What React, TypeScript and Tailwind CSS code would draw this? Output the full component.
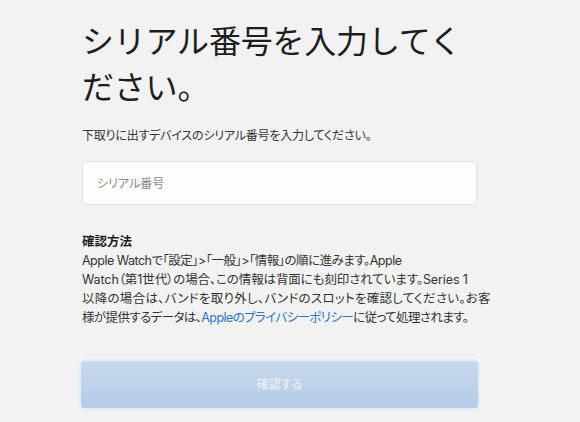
export default function App() {
  return (
    <div className="min-h-[422px] w-[580px] bg-[#f2f2f2] font-['Inter','Noto_Sans_CJK_JP',sans-serif] text-[#1d1d1f]">
      <div className="ml-[82px] w-[396px] pt-[19px]">
        <h1 className="text-[32px] leading-[46px] font-normal tracking-[-0.2px] text-[#1d1d1f]">
          シリアル番号を入力してください。
        </h1>

        <p className="mt-[16px] text-[12px] leading-[18px] tracking-[-0.2px] text-[#333] [font-feature-settings:'palt']">
          下取りに出すデバイスのシリアル番号を入力してください。
        </p>

        <input
          type="text"
          placeholder="シリアル番号"
          className="mt-[16px] block h-[44px] w-[395px] rounded-[4px] border border-[#e2e2e2] bg-[#fdfdfd] px-[14px] text-[12px] text-[#333] outline-none placeholder:text-[#8a8a8a] [font-feature-settings:'palt']"
        />

        <div className="mt-[27px] text-[12.5px] leading-[19px] text-[#333] [font-feature-settings:'palt']">
          <h2 className="font-bold text-[#1d1d1f]">確認方法</h2>
          <p className="whitespace-nowrap">
            <span className="tracking-[-0.5px]">
              Apple Watchで「設定」&gt;「一般」&gt;「情報」の順に進みます。Apple
            </span>
            <br />
            <span className="tracking-[-0.1px]">
              Watch（第1世代）の場合、この情報は背面にも刻印されています。Series 1
            </span>
            <br />
            <span className="tracking-[0.27px]">
              以降の場合は、バンドを取り外し、バンドのスロットを確認してください。お客
            </span>
            <br />
            <span className="tracking-[-0.6px]">
              様が提供するデータは、
              <a href="#" className="text-[#2d72c4]">
                Appleのプライバシーポリシー
              </a>
              に従って処理されます。
            </span>
          </p>
        </div>

        <button
          type="button"
          className="mt-[34px] flex h-[47px] w-[397px] -ml-px items-center justify-center rounded-[4px] bg-gradient-to-b from-[#c7d9ed] to-[#b5cbe6] text-[12px] text-[#eef3fa] ring-2 ring-[#e4ecf6] [font-feature-settings:'palt']"
        >
          確認する
        </button>
      </div>
    </div>
  )
}
